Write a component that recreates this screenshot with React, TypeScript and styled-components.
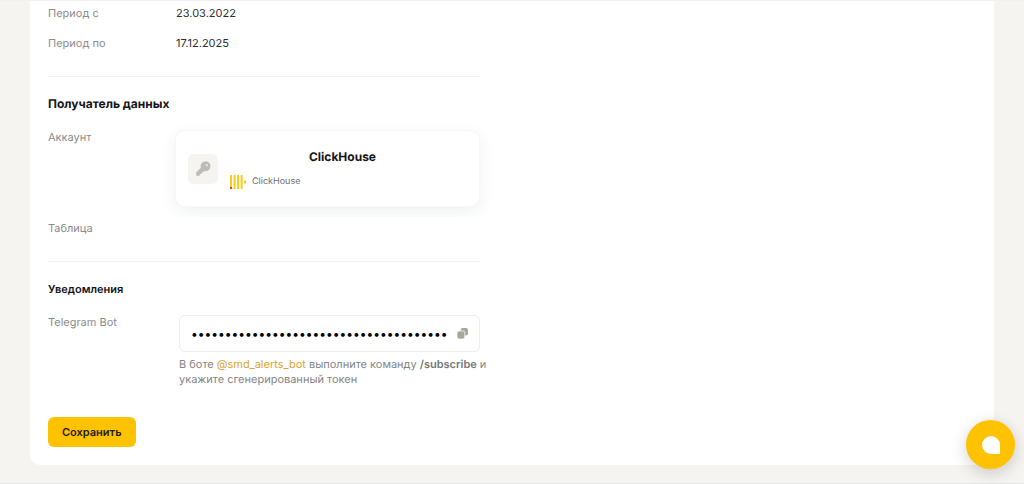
import React from "react";
import styled, { createGlobalStyle, css } from "styled-components";

const GlobalStyle = createGlobalStyle`
  *, *::before, *::after { box-sizing: border-box; }
  body {
    margin: 0;
    background: #f5f4f0;
    color: #2c2c2c;
    font-family: Inter, "Liberation Sans", sans-serif;
    font-size: 11px;
    line-height: 16px;
    text-rendering: geometricPrecision;
  }
`;

const Page = styled.div`
  min-height: 100vh;
  padding: 0 30px 18px;
  border-top: 1px solid #f1f1f0;
  border-bottom: 1px solid #e6e6e4;
`;

const Panel = styled.main`
  padding: 4px 18px 18px;
  background: #fff;
  border-radius: 0 0 10px 10px;
`;

const Form = styled.form`
  max-width: 432px;
`;

const Section = styled.section<{ $divided?: boolean }>`
  ${(p) =>
    p.$divided &&
    css`
      border-top: 1px solid #f3f3f2;
      padding-top: 19px;
    `}
`;

const Row = styled.div<{ $gap: number; $cover?: boolean }>`
  display: grid;
  grid-template-columns: 127px minmax(0, 1fr);
  padding-bottom: ${(p) => p.$gap}px;
  ${(p) =>
    p.$cover &&
    css`
      position: relative;
      padding-top: 3px;
      background: #fff;
    `}
`;

const Label = styled.label`
  color: #8b8b8b;
`;

const Value = styled.span`
  padding-left: 1px;
`;

const Title = styled.h2<{ $small?: boolean }>`
  margin: 0 0 17px;
  font-size: ${(p) => (p.$small ? 11 : 12)}px;
  line-height: 16px;
  font-weight: ${(p) => (p.$small ? 600 : 700)};
  color: #151515;
`;

const Account = styled.div`
  display: flex;
  align-items: center;
  gap: 12px;
  height: 77px;
  margin-top: 1px;
  padding: 0 12px;
  background: #fff;
  border: 1px solid #f7f7f6;
  border-radius: 10px;
  box-shadow: 0 5px 16px rgba(30, 50, 50, 0.07);
`;

const KeyBadge = styled.span`
  display: grid;
  place-items: center;
  width: 30px;
  height: 30px;
  border-radius: 6px;
  background: #f5f4f1;
`;

const AccountBody = styled.div`
  flex: 1;
  display: grid;
  gap: 9px;
  padding-top: 2px;
`;

const AccountName = styled.strong`
  font-size: 12px;
  font-weight: 700;
  text-align: center;
  color: #151515;
  padding-right: 12px;
`;

const Source = styled.span`
  display: flex;
  align-items: center;
  gap: 6px;
  font-size: 9px;
  color: #6f6f6f;
`;

const TokenCell = styled.div`
  padding: 1px 0 0 4px;
`;

const TokenBox = styled.div`
  display: flex;
  align-items: center;
  height: 37px;
  padding: 0 11px;
  border: 1px solid #f0eee8;
  border-radius: 6px;
`;

const TokenInput = styled.input`
  flex: 1;
  min-width: 0;
  padding: 0;
  border: 0;
  outline: 0;
  background: transparent;
  color: #000;
  font: inherit;
  font-size: 12px;
`;

const CopyButton = styled.button`
  display: flex;
  padding: 0;
  border: 0;
  background: none;
  cursor: pointer;
`;

const Hint = styled.p`
  margin: 5px 0 0;
  line-height: 15px;
  white-space: nowrap;
  color: #858585;

  a {
    color: #d8a52b;
    text-decoration: none;
  }
  b {
    font-weight: 600;
    color: #777;
  }
`;

const SaveButton = styled.button`
  height: 30px;
  padding: 0 14px;
  border: 0;
  border-radius: 6px;
  background: #ffc200;
  color: #1f1a08;
  font: inherit;
  font-weight: 600;
  text-rendering: inherit;
  cursor: pointer;
`;

const ChatButton = styled.button`
  position: fixed;
  right: 9px;
  bottom: 15px;
  display: grid;
  place-items: center;
  width: 49px;
  height: 49px;
  padding: 0;
  border: 0;
  border-radius: 50%;
  background: #ffc200;
  box-shadow: 0 4px 16px rgba(0, 0, 0, 0.18);
  cursor: pointer;
`;

const KeyIcon = () => (
  <svg width="15" height="15" viewBox="0 0 15 15" aria-hidden="true">
    <path
      fill="#bcbcbb"
      fillRule="evenodd"
      d="M9.6 0.3a5 5 0 0 0-4.8 6.4L0.6 10.9c-.3.3-.4.6-.4 1v2c0 .5.3.8.8.8h2.1c.5 0 .8-.3.8-.8v-.8h.9c.5 0 .8-.3.8-.8v-.8h.8c.3 0 .5-.1.7-.3l1-1.1A5 5 0 1 0 9.6.3Zm1.3 2.9a1 1 0 1 1 0 2 1 1 0 0 1 0-2Z"
    />
  </svg>
);

const ClickHouseLogo = () => (
  <svg width="16" height="14" viewBox="0 0 16 14" aria-hidden="true">
    <path fill="#fbcb1c" d="M0 0h2v12H0zM3.6 0h2v14h-2zM7.1 0h2v14h-2zM10.6 0h2v14h-2zM14 5.5h2v3h-2z" />
    <path fill="#f23b20" d="M0 12h2v2H0z" />
  </svg>
);

const CopyIcon = () => (
  <svg width="11" height="11" viewBox="0 0 11 11" aria-hidden="true">
    <rect x="3.6" y="0" width="7.4" height="7.6" rx="2" fill="#a9a79d" />
    <rect x="0" y="3" width="7.8" height="8" rx="2" fill="#a9a79d" stroke="#fff" strokeWidth="0.7" />
  </svg>
);

const ChatIcon = () => (
  <svg width="18" height="18" viewBox="0 0 18 18" aria-hidden="true">
    <path fill="#fff" d="M9 0a9 9 0 0 1 9 9v8q0 1-1 1H9A9 9 0 0 1 9 0Z" />
  </svg>
);

export default function App() {
  return (
    <>
      <GlobalStyle />
      <Page>
        <Panel>
          <Form onSubmit={(e) => e.preventDefault()}>
            <Section>
              <Row $gap={14}>
                <Label as="span">Период с</Label>
                <Value>23.03.2022</Value>
              </Row>
              <Row $gap={25}>
                <Label as="span">Период по</Label>
                <Value>17.12.2025</Value>
              </Row>
            </Section>

            <Section $divided>
              <Title>Получатель данных</Title>
              <Row $gap={10}>
                <Label as="span">Аккаунт</Label>
                <Account>
                  <KeyBadge>
                    <KeyIcon />
                  </KeyBadge>
                  <AccountBody>
                    <AccountName>ClickHouse</AccountName>
                    <Source>
                      <ClickHouseLogo />
                      ClickHouse
                    </Source>
                  </AccountBody>
                </Account>
              </Row>
              <Row $gap={25} $cover>
                <Label as="span">Таблица</Label>
              </Row>
            </Section>

            <Section $divided>
              <Title $small>Уведомления</Title>
              <Row $gap={30}>
                <Label htmlFor="token">Telegram Bot</Label>
                <TokenCell>
                  <TokenBox>
                    <TokenInput
                      id="token"
                      type="password"
                      readOnly
                      value={"0".repeat(38)}
                    />
                    <CopyButton type="button" aria-label="Скопировать">
                      <CopyIcon />
                    </CopyButton>
                  </TokenBox>
                  <Hint>
                    В боте <a href="#bot">@smd_alerts_bot</a> выполните команду{" "}
                    <b>/subscribe</b> и
                    <br />
                    укажите сгенерированный токен
                  </Hint>
                </TokenCell>
              </Row>
            </Section>

            <SaveButton type="submit">Сохранить</SaveButton>
          </Form>
        </Panel>
      </Page>
      <ChatButton type="button" aria-label="Чат">
        <ChatIcon />
      </ChatButton>
    </>
  );
}
